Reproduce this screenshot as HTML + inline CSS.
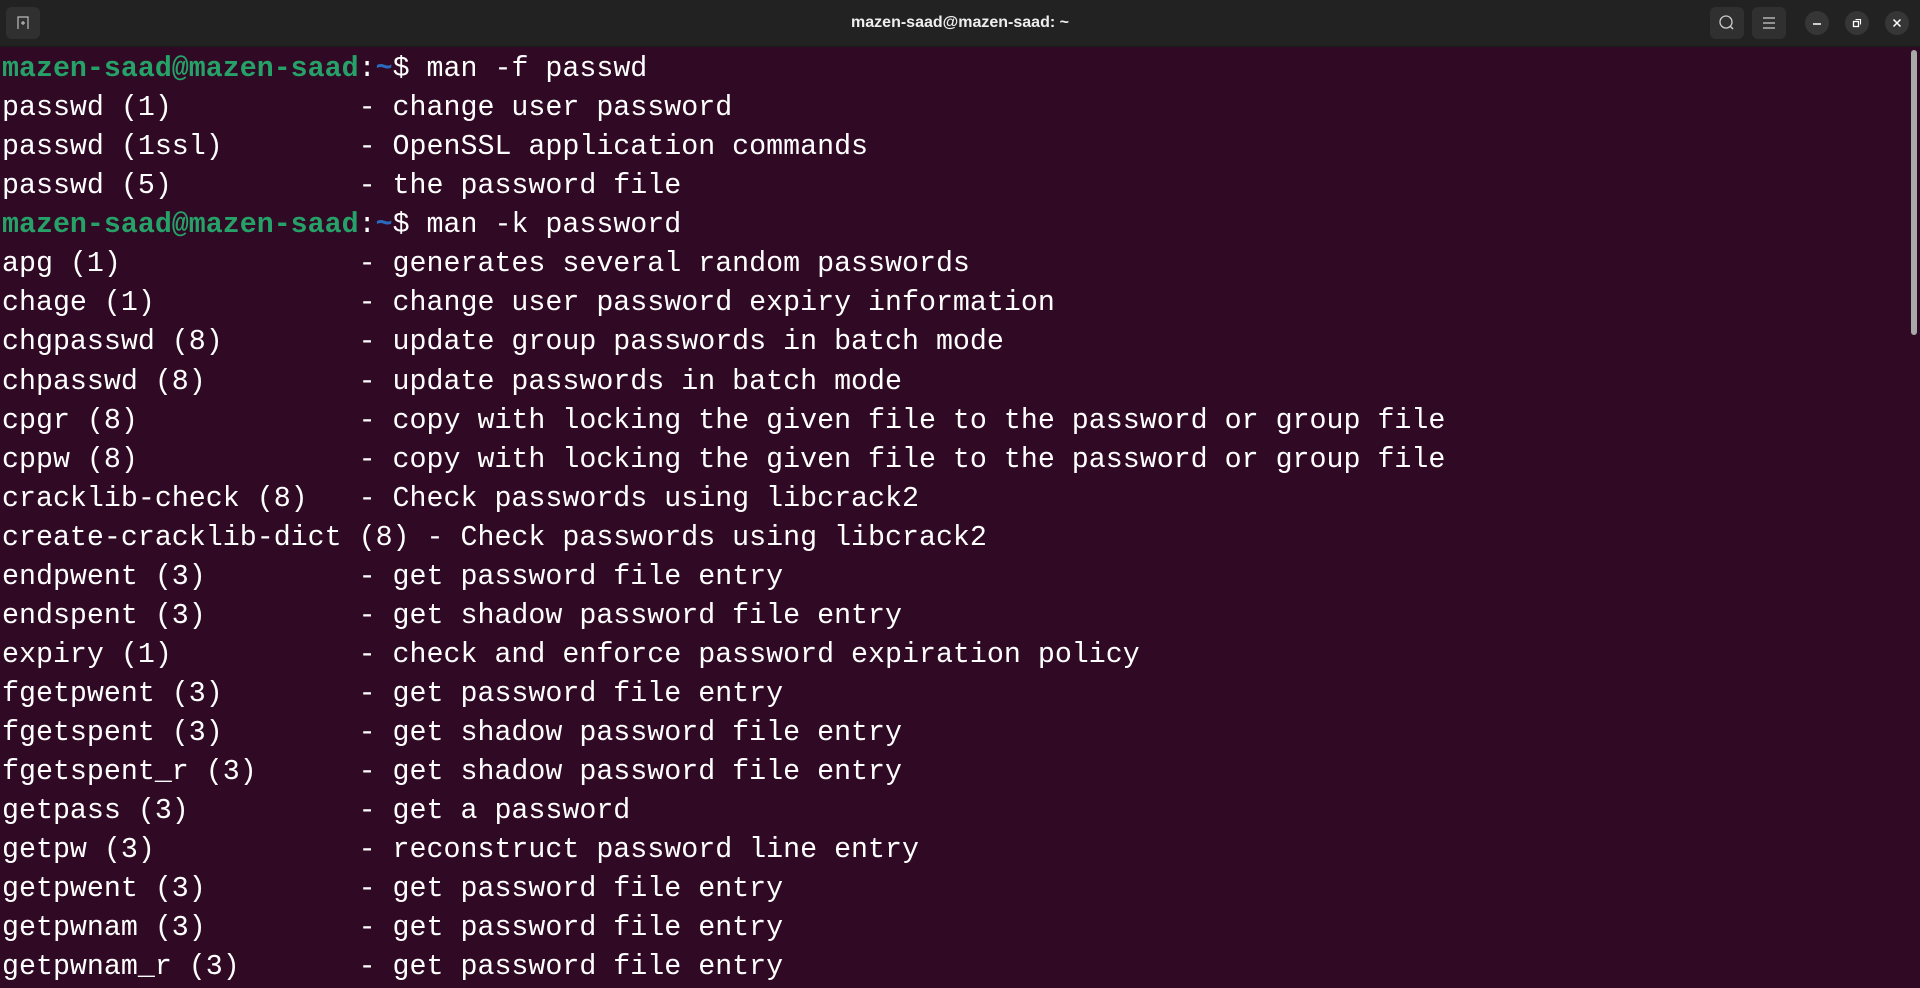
<!DOCTYPE html>
<html><head><meta charset="utf-8"><style>
html,body{margin:0;padding:0;width:1920px;height:961px;overflow:hidden;background:#300a24}
#tb{position:absolute;left:0;top:0;width:1920px;height:46px;background:#222;border-bottom:1px solid #1a1a1a}
#title{position:absolute;left:0;width:1920px;top:14px;text-align:center;color:#eee;font:bold 16px "Liberation Sans",sans-serif}
.btn{position:absolute;top:7px;width:34px;height:32px;background:#303030;border-radius:6px}
.cb{position:absolute;top:11px;width:24px;height:24px;border-radius:50%;background:#363636}
#term{position:absolute;left:2px;top:50px;font-family:"Liberation Mono",monospace;font-size:28.3px;line-height:39.07px;color:#fff;white-space:pre}
.g{color:#26a269;font-weight:bold}.b{color:#2a6bc0;font-weight:bold}
#sb{position:absolute;left:1911px;top:50px;width:6px;height:285px;background:#a8a8a8;border-radius:3px}
</style></head><body>
<div id="tb">
<div class="btn" style="left:6px"><svg width="34" height="32"><path d="M12 22V10h10v12M15 16h4M17 14v4" stroke="#bbb" stroke-width="1.2" fill="none"/></svg></div>
<div id="title">mazen-saad@mazen-saad: ~</div>
<div class="btn" style="left:1710px"><svg width="34" height="32"><circle cx="16" cy="15" r="6" stroke="#ccc" stroke-width="1.3" fill="none"/><path d="M20 19l3 3" stroke="#ccc" stroke-width="1.5"/></svg></div>
<div class="btn" style="left:1752px"><svg width="34" height="32"><path d="M11 11h12M11 16h12M11 21h12" stroke="#ccc" stroke-width="1.2"/></svg></div>
<div class="cb" style="left:1805px"><svg width="24" height="24"><path d="M8 13h8" stroke="#fff" stroke-width="1.5"/></svg></div>
<div class="cb" style="left:1845px"><svg width="24" height="24"><rect x="8.5" y="10.5" width="5" height="5" stroke="#fff" fill="none" stroke-width="1.3"/><path d="M10.5 8.5h5v5" stroke="#fff" fill="none" stroke-width="1.1"/></svg></div>
<div class="cb" style="left:1885px"><svg width="24" height="24"><path d="M8.5 8.5l7 7M15.5 8.5l-7 7" stroke="#fff" stroke-width="1.5"/></svg></div>
</div>
<div id="sb"></div>
<div id="term"><span class="g">mazen-saad@mazen-saad</span>:<span class="b">~</span>$ man -f passwd
passwd (1)           - change user password
passwd (1ssl)        - OpenSSL application commands
passwd (5)           - the password file
<span class="g">mazen-saad@mazen-saad</span>:<span class="b">~</span>$ man -k password
apg (1)              - generates several random passwords
chage (1)            - change user password expiry information
chgpasswd (8)        - update group passwords in batch mode
chpasswd (8)         - update passwords in batch mode
cpgr (8)             - copy with locking the given file to the password or group file
cppw (8)             - copy with locking the given file to the password or group file
cracklib-check (8)   - Check passwords using libcrack2
create-cracklib-dict (8) - Check passwords using libcrack2
endpwent (3)         - get password file entry
endspent (3)         - get shadow password file entry
expiry (1)           - check and enforce password expiration policy
fgetpwent (3)        - get password file entry
fgetspent (3)        - get shadow password file entry
fgetspent_r (3)      - get shadow password file entry
getpass (3)          - get a password
getpw (3)            - reconstruct password line entry
getpwent (3)         - get password file entry
getpwnam (3)         - get password file entry
getpwnam_r (3)       - get password file entry</div>
</body></html>
